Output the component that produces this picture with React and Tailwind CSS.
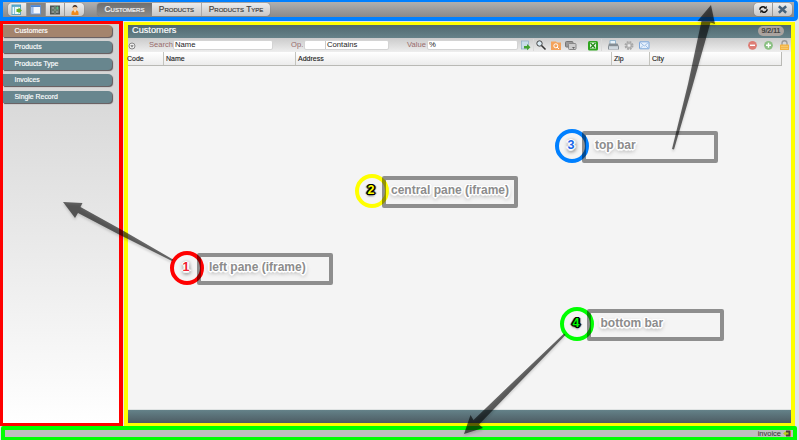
import React from "react";

const menu = ["Customers", "Products", "Products Type", "Invoices", "Single Record"];

function PanelIcon({ variant }) {
  if (variant === 0)
    return (
      <svg width="12" height="12" viewBox="0 0 12 12">
        <rect x="1" y="1" width="8.5" height="9.5" fill="#eef8fb" stroke="#5aa5c4" strokeWidth="1" />
        <path d="M1 2h9" stroke="#3f9ac0" strokeWidth="1.6" />
        <path d="M3.5 3v7" stroke="#8cc3d8" />
        <path d="M5.500 5h2V3.500L11 6.500 7.500 9.500V8h-2z" fill="#63b32c" />
      </svg>
    );
  if (variant === 1)
    return (
      <svg width="12" height="12" viewBox="0 0 12 12">
        <rect x="1" y="1.500" width="9.500" height="8.500" fill="#f4f7fd" stroke="#6f9bd6" />
        <path d="M1 2.200h9.500" stroke="#4e83cf" strokeWidth="1.600" />
        <path d="M2.600 3v6.500" stroke="#9cb9e6" strokeWidth="2" />
      </svg>
    );
  if (variant === 2)
    return (
      <svg width="12" height="12" viewBox="0 0 12 12">
        <rect x="1" y="1.500" width="10" height="9" fill="#4f5653" />
        <path d="M6 2v8M2 6h8" stroke="#8faf98" strokeWidth=".8" />
        <path d="M2.500 4h2.500M2.500 8h2.500M7 8h2.500" stroke="#c4cdc8" strokeWidth="1.200" />
        <path d="M8.300 2.500v3M6.800 4h3" stroke="#5cc487" strokeWidth="1.200" />
      </svg>
    );
  return (
    <svg width="12" height="12" viewBox="0 0 12 12">
      <path d="M2.500 11V9c0-2.200 1.500-2.800 3.500-2.800S9.500 6.800 9.500 9v2z" fill="#f08a1c" />
      <path d="M5 6.200h2L6 9z" fill="#fff" />
      <circle cx="6" cy="4" r="2.200" fill="#f7c99c" />
      <path d="M3.600 4C3.500 1.700 4.600 1 6 1s2.500.7 2.400 3L7.200 2.800H4.800z" fill="#3c2a20" />
    </svg>
  );
}

function TopBar() {
  return (
    <header className="h-[21px] w-[798px] border-[#0080ff] border-t-2 border-b-4 border-l-[3px] border-r-4 rounded-r-sm bg-gradient-to-b from-[#b0b0b0] to-[#898989] flex items-center justify-between pl-[5px] pr-[2px]">
      <div className="flex items-center gap-[13px]">
        <div className="flex h-[13px] rounded-[4px] overflow-hidden shadow-[0_0_1px_#555]">
          {[0, 1, 2, 3].map((v) => (
            <span
              key={v}
              className={
                "flex items-center justify-center w-[19px] border-r border-[#999] last:border-r-0 " +
                (v === 1 ? "bg-[#858585]" : "bg-gradient-to-b from-[#eeeeee] to-[#c8c8c8]")
              }
            >
              <PanelIcon variant={v} />
            </span>
          ))}
        </div>
        <nav className="flex h-[13px] rounded-[4px] overflow-hidden shadow-[0_0_1px_#555] text-[8.400px] leading-[12px] [font-variant:small-caps] text-[#444] [-webkit-text-stroke:0.200px_#444]">
          <span className="w-[55px] text-center bg-gradient-to-b from-[#6f6f6f] to-[#8a8a8a] text-[#f4f4f4] [-webkit-text-stroke:0.200px_#f4f4f4]">Customers</span>
          <span className="w-[50px] text-center border-r border-[#aaa] bg-gradient-to-b from-[#ececec] to-[#c6c6c6]">Products</span>
          <span className="w-[68px] text-center bg-gradient-to-b from-[#ececec] to-[#c6c6c6]">Products Type</span>
        </nav>
      </div>
      <div className="flex h-[13px] w-[38px] rounded-[4px] overflow-hidden shadow-[0_0_1px_#444] bg-gradient-to-b from-[#f0f0f0] to-[#c6c6c6]">
        <span className="w-1/2 border-r border-[#999] flex items-center justify-center">
          <svg width="11" height="11" viewBox="0 0 12 12" fill="none" stroke="#111" strokeWidth="1.700">
            <path d="M2 6.200C2 3.500 5.500 2 8 4M10 5.800C10 8.500 6.500 10 4 8" />
            <path d="M9.500 1.800v3.500H6.500zM2.500 10.200V6.700h3z" fill="#111" stroke="none" />
          </svg>
        </span>
        <span className="w-1/2 flex items-center justify-center">
          <svg width="11" height="11" viewBox="0 0 12 12" stroke="#47637b" strokeWidth="2.700">
            <path d="M2 2.500l8 7M10 2.500l-8 7" />
          </svg>
        </span>
      </div>
    </header>
  );
}

function SideMenu() {
  return (
    <aside className="w-[123px] h-[405px] border-[#f00] border-t-[3px] border-b-[3px] border-l-[3px] border-r-4 bg-gradient-to-b from-[#d0d0d0] to-white pt-[1px] flex flex-col gap-[4.400px]">
      {menu.map((m, i) => (
        <div
          key={m}
          className={
            "h-[12px] shrink-0 w-[109px] rounded-r-[4px] pl-[11.500px] text-[6.900px] leading-[11.500px] text-white shadow-[1px_1px_1px_#5f5557] [-webkit-text-stroke:0.15px_white] " +
            (i === 0 ? "bg-[#a4846d]" : "bg-[#68868e]")
          }
        >
          {m}
        </div>
      ))}
    </aside>
  );
}

const inputStyle = "h-[10px] bg-white rounded-[2px] border border-[#d4d4d4] text-[7.700px] leading-[8px] text-[#222] whitespace-nowrap";

function Toolbar() {
  return (
    <div className="h-[14px] bg-gradient-to-b from-[#cbcbcb] to-[#eeeeee] flex items-center text-[7.600px] text-[#986b6b] leading-none">
      <svg className="mt-[1px]" width="8" height="8" viewBox="0 0 8 8">
        <circle cx="4" cy="4" r="3" fill="#eee" stroke="#888" />
        <path d="M2.300 3.200h3.400L4 5.500z" fill="#777" />
      </svg>
      <span className="ml-[13px] w-[24px]">Search</span>
      <div className={inputStyle + " w-[100px] pl-px"}>Name</div>
      <span className="ml-[18px] w-[13px]">Op.</span>
      <div className={inputStyle + " w-[85px] flex"}>
        <span className="w-[21px] border-r border-[#ccc]" />
        <span className="pl-[1px]">Contains</span>
      </div>
      <span className="ml-[18px] w-[20px]">Value</span>
      <div className={inputStyle + " w-[91px] pl-px"}>%</div>
      <svg className="ml-[2px] shrink-0" width="132" height="14" viewBox="520 38 132 14">
        <rect x="521.500" y="41" width="7" height="8" fill="#c9dce9" stroke="#8cabc6" strokeWidth=".7" />
        <path d="M524 46h3v-2l3.500 3.200L527 50.300V48.500h-3z" fill="#43a333" />
        <path d="M533.500 39v12M601.500 39v12" stroke="#d9d9d9" />
        <circle cx="539.500" cy="43.500" r="2.700" fill="#dcecf5" stroke="#444" strokeWidth="1" />
        <path d="M541.500 45.500l4 4" stroke="#333" strokeWidth="1.600" />
        <path d="M551 41.500h5l1 1h4v7.500h-10z" fill="#f4a35b" />
        <circle cx="555.800" cy="45.800" r="2" fill="none" stroke="#fff" strokeWidth="1" />
        <path d="M557 47l2 2" stroke="#fff" />
        <rect x="565.500" y="41.500" width="7.500" height="5.500" rx="1" fill="#999" stroke="#777" />
        <rect x="568.500" y="43.500" width="7.500" height="6" rx="1" fill="#ccc" stroke="#888" />
        <path d="M572 47h3l-1.500 2z" fill="#666" />
        <rect x="588" y="41" width="10" height="9.500" rx="1.500" fill="#2fa51f" />
        <rect x="590" y="42.500" width="6" height="6" fill="#e9f8e5" />
        <path d="M590.500 43l4.500 5M595.500 43l-5 5" stroke="#258b1b" strokeWidth="1.300" />
        <path d="M610 44v-3.500h5.500V44" fill="#e7f2fa" stroke="#82a9c7" strokeWidth=".8" />
        <path d="M609 43.500h8.500l1.500 3v3h-11v-3z" fill="#858d94" />
        <path d="M609 46.200h9v3h-9z" fill="#cfd7de" />
        <circle cx="629" cy="45.500" r="3.300" fill="#bbb" stroke="#a8a8a8" strokeWidth="2.400" strokeDasharray="1.700 .9" />
        <circle cx="629" cy="45.500" r="1.300" fill="#ececec" />
        <rect x="639.500" y="41.800" width="9.500" height="7" rx=".5" fill="#e5f0fc" stroke="#7aa5da" />
        <path d="M640 42.300l4.300 3.700 4.300-3.700M640 48.500l3-3M648.500 48.500l-3-3" fill="none" stroke="#8bb1e0" strokeWidth=".8" />
      </svg>
      <svg className="ml-auto shrink-0" width="44" height="14" viewBox="747 38 44 14">
        <circle cx="752.500" cy="45.300" r="4.400" fill="#dd7d75" />
        <path d="M750 45.300h5" stroke="#fff" strokeWidth="1.400" />
        <circle cx="768.500" cy="45.300" r="4.400" fill="#8bc083" />
        <path d="M766 45.300h5M768.500 42.800v5" stroke="#fff" strokeWidth="1.400" />
        <path d="M782 45v-2c0-3 5-3 5 0v2" fill="none" stroke="#999" strokeWidth="1.300" />
        <rect x="780" y="44.500" width="9" height="5.500" rx=".5" fill="#f3b33f" />
        <path d="M781 46.300h7M781 48.300h7" stroke="#fbda8e" strokeWidth=".7" />
      </svg>
    </div>
  );
}

function MainPane() {
  return (
    <main className="ml-px w-[671px] h-[404px] mt-px border-[#ff0] border-t-[3px] border-b-[3px] border-l-4 border-r-4 bg-[#f4f4f4] flex flex-col">
      <div className="h-[13px] shrink-0 bg-gradient-to-b from-[#506970] to-[#668289] flex items-center justify-between pl-[4px] pr-[7px]">
        <span className="-mt-[2px] text-[9.200px] leading-none text-white [-webkit-text-stroke:0.15px_white]">Customers</span>
        <span className="mt-[-1px] h-[10px] w-[26px] rounded-full bg-[#aaa39f] text-center text-[7px] leading-[10px] text-[#333] [-webkit-text-stroke:0.200px_#333]">9/2/11</span>
      </div>
      <Toolbar />
      <div className="h-[14px] shrink-0 w-[654px] flex bg-gradient-to-b from-white to-[#ececec] border-b border-r border-[#b9b9b5] text-[7px] leading-[13px] text-[#222] [-webkit-text-stroke:0.120px_#222]">
        <span className="w-[36px] -indent-px border-r border-[#c4c4be]">Code</span>
        <span className="w-[132px] pl-[2px] border-r border-[#c4c4be]">Name</span>
        <span className="w-[316px] pl-[2px] border-r border-[#c4c4be]">Address</span>
        <span className="w-[38px] pl-[2px] border-r border-[#c4c4be]">Zip</span>
        <span className="pl-[2px]">City</span>
      </div>
      <div className="flex-1" />
      <div className="h-[14px] shrink-0 border-t border-[#dfe3e3] bg-gradient-to-b from-[#648289] to-[#4d5c63]" />
    </main>
  );
}

function Callout({ box, ring, number, label, labelPad, numberStyle }) {
  return (
    <div className={"absolute h-[35px] " + box}>
      <div className={"absolute left-0 top-0 w-[34px] h-[34px] rounded-full border-4 flex items-center justify-center text-[12.500px] font-bold leading-none " + ring}>
        <span className={"-mt-[2px] -ml-[2px] " + numberStyle}>{number}</span>
      </div>
      <div className={"absolute left-[27px] right-0 top-[2px] h-[32px] rounded-[2px] border-4 border-black/42 flex items-center " + labelPad}>
        <span className="-mt-[4px] whitespace-nowrap text-[12px] font-bold leading-none text-[#8c8c8c] [text-shadow:1px_0_#fff,-1px_0_#fff,0_1px_#fff,0_-1px_#fff,1px_1px_#fff,-1px_-1px_#fff,1px_-1px_#fff,-1px_1px_#fff,2px_0_1px_#fff,-2px_0_1px_#fff,0_2px_1px_#fff,0_2px_4px_#777]">
          {label}
        </span>
      </div>
    </div>
  );
}

const lightNumber = "[text-shadow:1px_0_#fff,-1px_0_#fff,0_1px_#fff,0_-1px_#fff,2px_0_1px_#fff,-2px_0_1px_#fff,0_2px_1px_#fff,0_2px_4px_#222,1px_1px_4px_#444]";
const darkNumber = "[text-shadow:1px_0_#000,-1px_0_#000,0_1px_#000,0_-1px_#000,1px_1px_#000,-1px_-1px_#000,1px_-1px_#000,-1px_1px_#000,2px_0_1px_#000,-2px_0_1px_#000,0_2px_2px_#555]";

export default function App() {
  return (
    <div className="relative w-[799px] h-[440px] overflow-hidden bg-[#dfe7e9] [font-family:'Liberation_Sans',Arial,sans-serif]">
      <TopBar />
      <div className="flex h-[405px]">
        <SideMenu />
        <MainPane />
      </div>
      <footer className="ml-px h-[14px] w-[796px] rounded-t-[2px] border-[#0f0] border-t-4 border-b-[3px] border-l-4 border-r-4 bg-[#bfbfbf] flex items-center justify-end gap-[2px] pr-[2px] text-[7.500px] leading-none text-[#333]">
        <span>invoice</span>
        <svg width="8" height="7" viewBox="0 0 8 7">
          <path d="M3 .5h4v6H3z" fill="#4d4036" />
          <path d="M0 3.500L3 1v1.500h2.500v2H3V6z" fill="#b9c91e" />
          <path d="M7.500 .5v6" stroke="#d96a36" />
        </svg>
      </footer>

      <Callout box="left-[170px] top-[251px] w-[163px]" ring="border-[#f00]" number="1" label="left pane (iframe)" labelPad="pl-[8px]" numberStyle={"text-[#f02030] " + lightNumber} />
      <Callout box="left-[355px] top-[174px] w-[163px]" ring="border-[#ff0]" number="2" label="central pane (iframe)" labelPad="pl-[5px]" numberStyle={"text-[#ff0] " + darkNumber} />
      <Callout box="left-[555px] top-[129px] w-[163px]" ring="border-[#0080ff]" number="3" label="top bar" labelPad="pl-[9px]" numberStyle={"text-[#1766e8] " + lightNumber} />
      <Callout box="left-[560px] top-[307px] w-[164px]" ring="border-[#0f0]" number="4" label="bottom bar" labelPad="pl-[9.500px]" numberStyle={"text-[#0f0] " + darkNumber} />

      <svg className="absolute inset-0 pointer-events-none drop-shadow-[0_2px_1px_rgba(0,0,0,0.25)]" width="799" height="440" viewBox="0 0 799 440">
        <g fill="#000" fillOpacity=".58">
          <path d="M63 202L82.500 203L80.500 207L122 230L173 259.500L172 261L119 234.500L78 213L75 218z" />
          <path d="M711 5L715 24L710.500 22.500L692 88L674 149.500L672 149L688 84L701.500 21L697.500 21z" />
          <path d="M464 434L470.500 415L473.500 420L512 383L564 333.500L565.500 335L519 383L479 424.500L483 428z" />
        </g>
      </svg>
    </div>
  );
}
